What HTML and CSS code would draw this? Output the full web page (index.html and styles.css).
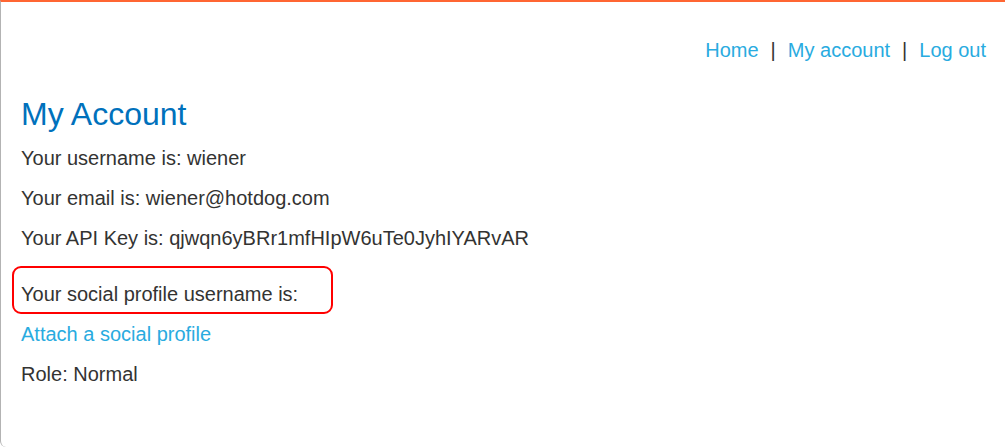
FILE: index.html
```html
<!DOCTYPE html>
<html>
<head>
    <title>My Account</title>
    <link rel="stylesheet" href="styles.css">
</head>
<body>
    <div class="container">
        <nav class="top-links">
            <a href="#">Home</a><span class="sep">|</span><a href="#">My account</a><span class="sep">|</span><a href="#">Log out</a>
        </nav>
        <h1>My Account</h1>
        <div class="details">
            <p>Your username is: wiener</p>
            <p>Your email is: wiener@hotdog.com</p>
            <p>Your API Key is: qjwqn6yBRr1mfHIpW6uTe0JyhIYARvAR</p>
            <p class="social">
                Your social profile username is:
                <span class="highlight"></span>
            </p>
            <p><a href="#">Attach a social profile</a></p>
            <p>Role: Normal</p>
        </div>
    </div>
</body>
</html>
```

FILE: styles.css
```css
body {
    margin: 0;
    font-family: "Liberation Sans", Arial, sans-serif;
    font-size: 20px;
    line-height: 24px;
    color: #333332;
    background-color: #ffffff;
}
a {
    color: #29abe0;
    text-decoration: none;
}
.container {
    box-sizing: border-box;
    height: 447px;
    padding: 36px 19px 0 20px;
    border-top: 2px solid #ff6633;
    border-left: 1px solid #b3b3b3;
    border-bottom-left-radius: 6px;
}
.top-links {
    text-align: right;
}
.sep {
    margin: 0 12px;
    color: #333332;
}
h1 {
    margin: 33px 0 13px 0;
    font-size: 32px;
    line-height: 38px;
    font-weight: normal;
    color: #0071bc;
}
.details p {
    margin: 0 0 16px 0;
}
.details .social {
    position: relative;
    margin-top: 32px;
}
.highlight {
    position: absolute;
    left: -9px;
    top: -16px;
    width: 321px;
    height: 48px;
    box-sizing: border-box;
    border: 2.5px solid #ff0000;
    border-radius: 9px;
}
```
